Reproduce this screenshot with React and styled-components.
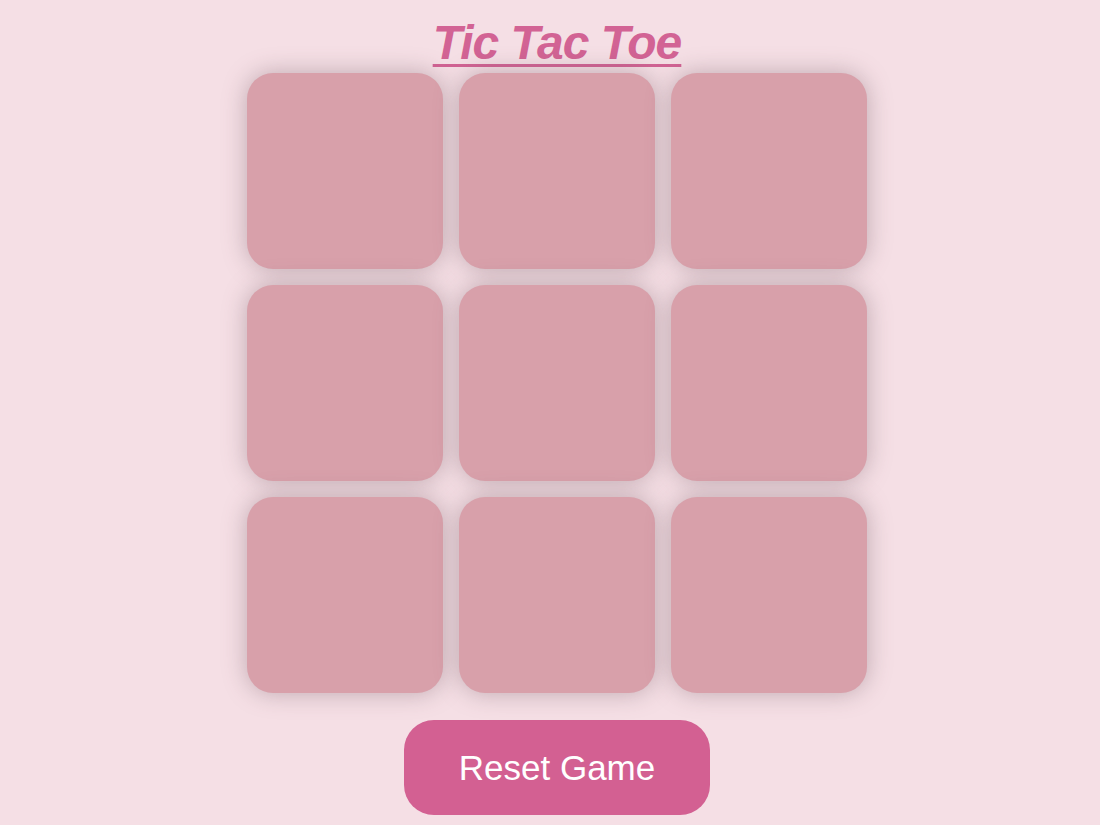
import styled, { createGlobalStyle } from "styled-components";
import { useState } from "react";

const GlobalStyle = createGlobalStyle`
  body {
    margin: 0;
    background: #f5dfe5;
    font-family: "Liberation Sans", Arial, sans-serif;
  }
`;

const Page = styled.main`
  display: flex;
  flex-direction: column;
  align-items: center;
  padding: 17px 0 0 14px;
`;

const Title = styled.h1`
  margin: 0;
  font-size: 48px;
  line-height: 52px;
  font-weight: 700;
  font-style: italic;
  letter-spacing: -1px;
  text-decoration: underline;
  text-decoration-thickness: 3px;
  text-underline-offset: 5px;
  color: #d26394;
`;

const Board = styled.div`
  display: grid;
  grid-template-columns: repeat(3, 196px);
  grid-auto-rows: 196px;
  gap: 16px;
  margin-top: 4px;
`;

const Cell = styled.button`
  border: none;
  border-radius: 26px;
  background: #d8a0aa;
  box-shadow: 0 0 24px rgba(110, 85, 95, 0.4);
  font-family: inherit;
  font-size: 90px;
  font-weight: 700;
  color: #fff;
  cursor: pointer;
`;

const ResetButton = styled.button`
  margin-top: 27px;
  width: 306px;
  height: 95px;
  border: none;
  border-radius: 30px;
  background: #d36092;
  color: #fff;
  font-family: inherit;
  font-size: 35px;
  cursor: pointer;
`;

export default function App() {
  const [cells, setCells] = useState(Array(9).fill(""));
  const [turn, setTurn] = useState("X");

  const play = (i) => {
    if (cells[i]) return;
    const next = [...cells];
    next[i] = turn;
    setCells(next);
    setTurn(turn === "X" ? "O" : "X");
  };

  return (
    <>
      <GlobalStyle />
      <Page>
        <Title>Tic Tac Toe</Title>
        <Board>
          {cells.map((c, i) => (
            <Cell key={i} onClick={() => play(i)}>
              {c}
            </Cell>
          ))}
        </Board>
        <ResetButton
          onClick={() => {
            setCells(Array(9).fill(""));
            setTurn("X");
          }}
        >
          Reset Game
        </ResetButton>
      </Page>
    </>
  );
}
